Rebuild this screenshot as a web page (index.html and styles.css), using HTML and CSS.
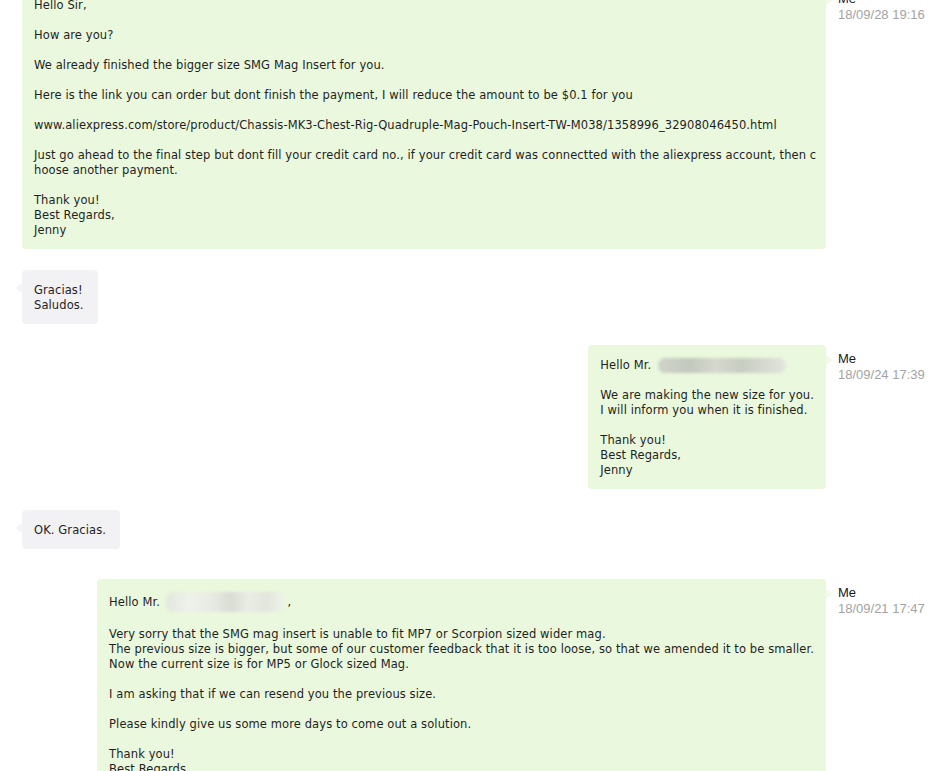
FILE: index.html
```html
<!DOCTYPE html>
<html>
<head>
<meta charset="utf-8">
<link rel="stylesheet" href="styles.css">
</head>
<body>
<div class="chat">
  <div class="row row-me">
    <div class="bubble bubble-me bubble-wide">
      <p>Hello Sir,</p>
      <p>How are you?</p>
      <p>We already finished the bigger size SMG Mag Insert for you.</p>
      <p>Here is the link you can order but dont finish the payment, I will reduce the amount to be $0.1 for you</p>
      <p>www.aliexpress.com/store/product/Chassis-MK3-Chest-Rig-Quadruple-Mag-Pouch-Insert-TW-M038/1358996_32908046450.html</p>
      <p>Just go ahead to the final step but dont fill your credit card no., if your credit card was connectted with the aliexpress account, then c<br>hoose another payment.</p>
      <p>Thank you!<br>Best Regards,<br>Jenny</p>
    </div>
    <div class="meta"><div class="who">Me</div><div class="when">18/09/28 19:16</div></div>
  </div>

  <div class="row row-them">
    <div class="bubble bubble-them">
      <p>Gracias!<br>Saludos.</p>
    </div>
  </div>

  <div class="row row-me">
    <div class="bubble bubble-me">
      <p>Hello Mr. <span class="blur blur-a"></span></p>
      <p>We are making the new size for you.<br>I will inform you when it is finished.</p>
      <p>Thank you!<br>Best Regards,<br>Jenny</p>
    </div>
    <div class="meta"><div class="who">Me</div><div class="when">18/09/24 17:39</div></div>
  </div>

  <div class="row row-them">
    <div class="bubble bubble-them">
      <p>OK. Gracias.</p>
    </div>
  </div>

  <div class="row row-me row-last">
    <div class="bubble bubble-me">
      <p>Hello Mr. <span class="blur blur-b"></span> ,</p>
      <p>Very sorry that the SMG mag insert is unable to fit MP7 or Scorpion sized wider mag.<br>The previous size is bigger, but some of our customer feedback that it is too loose, so that we amended it to be smaller.<br>Now the current size is for MP5 or Glock sized Mag.</p>
      <p>I am asking that if we can resend you the previous size.</p>
      <p>Please kindly give us some more days to come out a solution.</p>
      <p>Thank you!<br>Best Regards,<br>Jenny</p>
    </div>
    <div class="meta"><div class="who">Me</div><div class="when">18/09/21 17:47</div></div>
  </div>
</div>
</body>
</html>
```

FILE: styles.css
```css
html, body {
  margin: 0;
  padding: 0;
  background: #ffffff;
  overflow: hidden;
}

.chat {
  display: flex;
  flex-direction: column;
  gap: 21px;
  margin-top: -15px;
  padding-left: 22px;
  font-family: "DejaVu Sans", sans-serif;
  font-size: 11.5px;
  letter-spacing: 0.1px;
  line-height: 15px;
  color: #1f1f1f;
}

.row {
  display: flex;
  align-items: flex-start;
}

.row-me {
  justify-content: flex-end;
}

.row-them {
  justify-content: flex-start;
}

.row-last {
  margin-top: 9px;
}

.bubble {
  position: relative;
  border-radius: 4px;
  padding: 13px 12px 11px;
  white-space: nowrap;
}

.bubble-wide {
  flex: 1;
  min-width: 0;
}

.bubble p {
  margin: 0 0 15px;
}

.bubble p:last-child {
  margin-bottom: 0;
}

.bubble-me {
  background: #eaf8dd;
}

.bubble-me::after {
  content: "";
  position: absolute;
  right: -7px;
  top: 10px;
  border-style: solid;
  border-width: 5px 0 5px 7px;
  border-color: transparent transparent transparent #f2faeb;
}

.bubble-them {
  background: #f2f1f4;
  padding-right: 14px;
}

.bubble-them::before {
  content: "";
  position: absolute;
  left: -7px;
  top: 13px;
  border-style: solid;
  border-width: 5px 7px 5px 0;
  border-color: transparent #f4f3f6 transparent transparent;
}

.meta {
  flex: none;
  width: 114px;
  margin-left: 12px;
  padding-top: 6px;
  font-family: "Liberation Sans", Arial, sans-serif;
  font-size: 13px;
  letter-spacing: 0;
  line-height: 16px;
}

.who {
  color: #1a1a1a;
}

.when {
  color: #a3a3a3;
}

.blur {
  display: inline-block;
  vertical-align: middle;
  border-radius: 7px;
  filter: blur(1.5px);
}

.blur-a {
  width: 128px;
  height: 15px;
  margin-left: 3px;
  background: linear-gradient(90deg, #cfd3c8 0%, #c3c8bc 25%, #d4d8cd 45%, #c8cdc1 65%, #d6dad0 85%, #e2e6dc 100%);
}

.blur-b {
  width: 118px;
  height: 20px;
  margin-left: 2px;
  background: linear-gradient(90deg, #e3e8de 0%, #eef2ea 20%, #e6eae2 40%, #d8dcd3 55%, #e9ede4 70%, #e1e5dc 85%, #eef2e9 100%);
}
```
